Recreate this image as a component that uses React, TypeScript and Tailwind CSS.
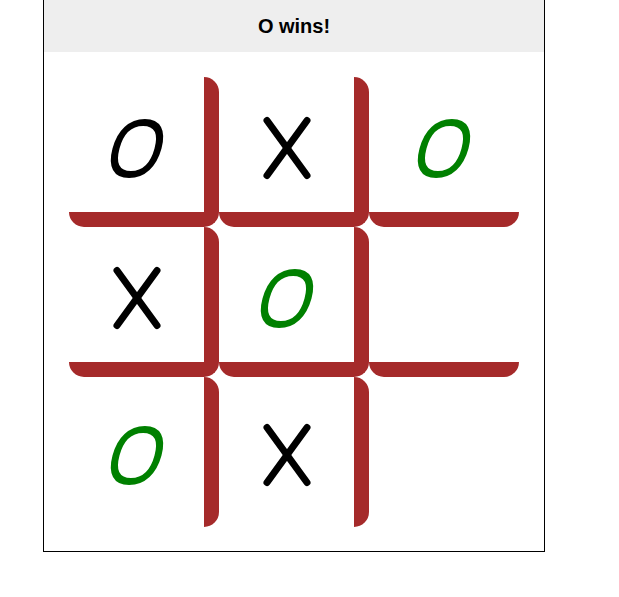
import React from 'react';

type Mark = 'X' | 'O' | null;

const board: Mark[] = ['O', 'X', 'O', 'X', 'O', null, 'O', 'X', null];
const winLine = [2, 4, 6];

// rounded-square-ish oval, like an italic O glyph
const A = 21;
const B = 26;
const K = 0.64;
const oPath = `M0,${-B} C${K * A},${-B} ${A},${-K * B} ${A},0 C${A},${K * B} ${K * A},${B} 0,${B} C${-K * A},${B} ${-A},${K * B} ${-A},0 C${-A},${-K * B} ${-K * A},${-B} 0,${-B} Z`;

function XMark() {
  return (
    <svg width="80" height="80" viewBox="0 0 80 80">
      <g stroke="#000" strokeWidth="7" strokeLinecap="round">
        <line x1="20" y1="15.5" x2="60" y2="70.5" />
        <line x1="60" y1="15.5" x2="20" y2="70.5" />
      </g>
    </svg>
  );
}

function OMark({ color }: { color: string }) {
  return (
    <svg width="80" height="80" viewBox="0 0 80 80">
      <g transform="translate(40 43.5) skewX(-15)">
        <path d={oPath} fill="none" stroke={color} strokeWidth="7" />
      </g>
    </svg>
  );
}

function Cell({ value, index }: { value: Mark; index: number }) {
  const col = index % 3;
  const row = Math.floor(index / 3);
  const right = col < 2 ? 'border-r-[15px]' : '';
  const bottom = row < 2 ? 'border-b-[15px]' : '';
  const winning = winLine.includes(index);

  return (
    <div
      className={`w-[150px] h-[150px] rounded-[15px] border-[#a52a2a] flex items-center justify-center ${right} ${bottom}`}
    >
      {value === 'X' && <XMark />}
      {value === 'O' && <OMark color={winning ? '#008000' : '#000'} />}
    </div>
  );
}

export default function App() {
  return (
    <div className="min-h-screen bg-white font-['Liberation_Sans',Arial,sans-serif]">
      <div className="ml-[43px] w-[502px] border-x border-b border-black">
        <div className="h-[52px] bg-[#eeeeee] flex items-center justify-center text-[20px] font-bold text-black">
          O wins!
        </div>
        <div className="pt-[25px] pb-[24px]">
          <div className="mx-auto w-[450px] grid grid-cols-3">
            {board.map((v, i) => (
              <Cell key={i} value={v} index={i} />
            ))}
          </div>
        </div>
      </div>
    </div>
  );
}
